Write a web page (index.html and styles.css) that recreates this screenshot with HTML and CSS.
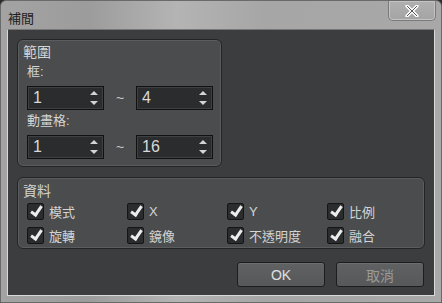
FILE: index.html
```html
<!DOCTYPE html>
<html lang="zh-Hant">
<head>
  <meta charset="UTF-8" />
  <title>補間</title>
  <link rel="stylesheet" href="styles.css">
</head>
<body>
  <div class="window">
    <div class="titlebar">
      <span class="title">補間</span>
      <div class="close">
        <svg width="16" height="12" viewBox="0 0 16 12"><path d="M3 1 L13 11 M13 1 L3 11" stroke="#fff" stroke-width="3.2" stroke-linecap="round"/><path d="M3 1 L13 11 M13 1 L3 11" stroke="#555" stroke-width="1" /></svg>
      </div>
    </div>

    <div class="content">
      <div class="group range">
        <div class="group-title">範圍</div>
        <div class="field-label">框:</div>
        <div class="spin-row">
          <div class="spin"><span>1</span><svg class="arrows" width="8" height="14" viewBox="0 0 8 14"><path d="M4 0 L8 4 L0 4 Z M0 10 L8 10 L4 14 Z" fill="#d4d4d4"/></svg></div>
          <span class="tilde">~</span>
          <div class="spin"><span>4</span><svg class="arrows" width="8" height="14" viewBox="0 0 8 14"><path d="M4 0 L8 4 L0 4 Z M0 10 L8 10 L4 14 Z" fill="#d4d4d4"/></svg></div>
        </div>
        <div class="field-label">動畫格:</div>
        <div class="spin-row">
          <div class="spin"><span>1</span><svg class="arrows" width="8" height="14" viewBox="0 0 8 14"><path d="M4 0 L8 4 L0 4 Z M0 10 L8 10 L4 14 Z" fill="#d4d4d4"/></svg></div>
          <span class="tilde">~</span>
          <div class="spin"><span>16</span><svg class="arrows" width="8" height="14" viewBox="0 0 8 14"><path d="M4 0 L8 4 L0 4 Z M0 10 L8 10 L4 14 Z" fill="#d4d4d4"/></svg></div>
        </div>
      </div>

      <div class="group data">
        <div class="group-title">資料</div>
        <div class="checks">
          <label class="check"><i class="box"></i>模式</label>
          <label class="check"><i class="box"></i>X</label>
          <label class="check"><i class="box"></i>Y</label>
          <label class="check"><i class="box"></i>比例</label>
          <label class="check"><i class="box"></i>旋轉</label>
          <label class="check"><i class="box"></i>鏡像</label>
          <label class="check"><i class="box"></i>不透明度</label>
          <label class="check"><i class="box"></i>融合</label>
        </div>
      </div>

      <div class="buttons">
        <button class="btn">OK</button>
        <button class="btn dim">取消</button>
      </div>
    </div>
  </div>
</body>
</html>
```

FILE: styles.css
```css
body {
  margin: 0;
  font-family: "Liberation Sans", "Noto Sans CJK TC", sans-serif;
  background: #2b2b2b;
}

.window {
  width: 442px;
  height: 303px;
  box-sizing: border-box;
  background: linear-gradient(90deg, #a3a3a3 0%, #9c9c9c 20%, #b4b4b4 40%, #a6a6a6 60%, #a8a8a8 100%);
  border: 1px solid #6a6a6a;
  border-radius: 6px 6px 0 0;
  padding: 0 6px 6px;
  display: flex;
  flex-direction: column;
}

.titlebar {
  height: 28px;
  display: flex;
  align-items: flex-start;
  justify-content: space-between;
}

.title {
  font-size: 13px;
  color: #1e1e1e;
  margin: 7px 0 0 1px;
}

.close {
  width: 46px;
  height: 19px;
  margin-right: -1px;
  border: 1px solid #7a7a7a;
  border-top: none;
  border-radius: 0 0 5px 5px;
  background: linear-gradient(#b0b0b0, #a4a4a4);
  box-shadow: inset 0 0 0 1px #c4c4c4;
  display: flex;
  align-items: center;
  justify-content: center;
}

.content {
  flex: 1;
  background: #3b3d3e;
  border: 1px solid #d8d8d8;
  border-top-color: #777;
  padding: 9px 9px 0 9px;
  display: flex;
  flex-direction: column;
}

.group {
  background: #4a4c4d;
  border: 1px solid #232425;
  border-radius: 6px;
  box-shadow: inset 0 0 0 1px #5a5c5d;
  color: #d4d4d4;
  font-size: 13px;
}

.range {
  width: 205px;
  height: 128px;
  box-sizing: border-box;
  padding: 4px 0 0 9px;
}

.group-title {
  font-size: 14px;
  margin-left: -4px;
  line-height: 17px;
}

.field-label {
  line-height: 16px;
  margin-top: 3px;
}

.spin-row {
  display: flex;
  align-items: center;
  margin-top: 6px;
}

.spin {
  width: 77px;
  height: 24px;
  box-sizing: border-box;
  background: #2a2c2d;
  border: 1px solid #111;
  box-shadow: inset 0 0 0 1px #3e4041;
  display: flex;
  align-items: center;
  justify-content: space-between;
  padding: 0 5px 0 5px;
  font-size: 16px;
  color: #d8d8d8;
}

.tilde {
  width: 32px;
  text-align: center;
  font-size: 14px;
  color: #c8c8c8;
}

.data {
  margin-top: 10px;
  height: 72px;
  box-sizing: border-box;
  padding: 5px 0 0 9px;
}

.checks {
  display: grid;
  grid-template-columns: repeat(4, 100px);
  row-gap: 6px;
  margin-top: 2px;
}

.check {
  display: flex;
  align-items: center;
  gap: 5px;
  font-size: 13px;
  color: #d4d4d4;
  height: 18px;
}

.box {
  width: 17px;
  height: 17px;
  box-sizing: border-box;
  background: #2a2c2d;
  border: 1px solid #141515;
  border-radius: 2px;
  position: relative;
}

.box::after {
  content: "";
  position: absolute;
  left: 5px;
  top: 0;
  width: 4px;
  height: 9px;
  border: solid #ececec;
  border-width: 0 3px 3px 0;
  transform: rotate(35deg);
}

.buttons {
  display: flex;
  justify-content: flex-end;
  gap: 11px;
  margin-top: 13px;
  padding-right: 1px;
}

.btn {
  width: 88px;
  height: 25px;
  background: linear-gradient(#5f6162, #56585a);
  border: 1px solid #1c1d1e;
  border-radius: 3px;
  box-shadow: inset 0 1px 0 #6c6e6f;
  color: #e0e0e0;
  font-family: "Liberation Sans", "Noto Sans CJK TC", sans-serif;
  font-size: 14px;
  padding: 0;
}

.btn.dim {
  color: #9a9a9a;
}
```
